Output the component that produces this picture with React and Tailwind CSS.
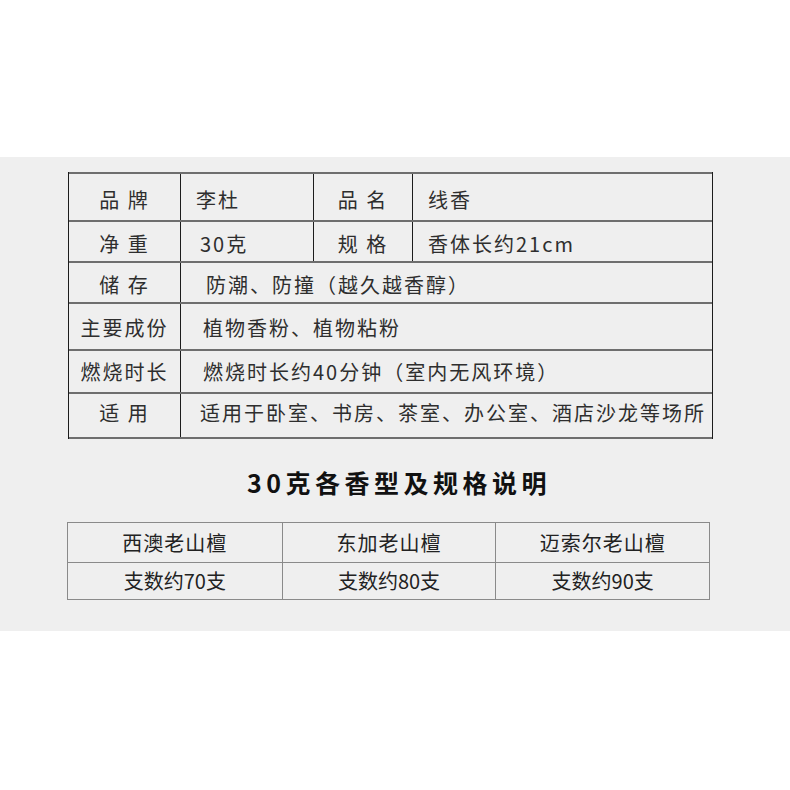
import React from "react";

const font = { fontFamily: '"Noto Sans CJK SC", "Noto Sans", sans-serif' };

function Row({ h, children, cols, last }) {
  return (
    <div
      className={`grid border-t-2 border-[#6e6e6e] ${last ? "border-b-2" : ""} ${cols}`}
      style={{ height: h }}
    >
      {children}
    </div>
  );
}

export default function App() {
  const labelCls =
    "flex items-center justify-center text-[20px] tracking-[2px] text-[#2e2e2e] leading-none";
  const valCls =
    "flex items-center border-l-[1.5px] border-[#1c1c1c] text-[20px] tracking-[2px] text-[#2e2e2e] leading-none whitespace-nowrap";
  return (
    <div className="w-[790px] h-[790px] bg-white" style={font}>
      <div className="h-[157px]" />
      <div className="h-[474px] bg-[#efefef] pt-[15px] flex flex-col">
        <div className="ml-[68px] w-[645px] border-x-[1.5px] border-[#1c1c1c]">
          <Row h={48} cols="grid-cols-[111px_133px_99px_1fr]">
            <div className={`${labelCls} pt-[6px]`}>品 牌</div>
            <div className={`${valCls} pl-[15px] pt-[6px]`}>李杜</div>
            <div className={`${valCls} justify-center pt-[6px]`}>品 名</div>
            <div className={`${valCls} pl-[15px] pt-[6px]`}>线香</div>
          </Row>
          <Row h={41} cols="grid-cols-[111px_133px_99px_1fr]">
            <div className={`${labelCls} pt-[4px]`}>净 重</div>
            <div className={`${valCls} pl-[19px] pt-[4px]`}>30克</div>
            <div className={`${valCls} justify-center pt-[4px]`}>规 格</div>
            <div className={`${valCls} pl-[15px] pt-[4px]`}>香体长约21cm</div>
          </Row>
          <Row h={41} cols="grid-cols-[111px_1fr]">
            <div className={`${labelCls} pt-[5px]`}>储 存</div>
            <div className={`${valCls} pl-[25px] pt-[5px]`}>防潮、防撞（越久越香醇）</div>
          </Row>
          <Row h={47} cols="grid-cols-[111px_1fr]">
            <div className={`${labelCls} pt-[3px]`}>主要成份</div>
            <div className={`${valCls} pl-[22px] pt-[3px]`}>植物香粉、植物粘粉</div>
          </Row>
          <Row h={43} cols="grid-cols-[111px_1fr]">
            <div className={`${labelCls} pt-[1px]`}>燃烧时长</div>
            <div className={`${valCls} pl-[22px] pt-[1px]`}>燃烧时长约40分钟（室内无风环境）</div>
          </Row>
          <Row h={47} cols="grid-cols-[111px_1fr]" last>
            <div className={`${labelCls} pb-[6px]`}>适 用</div>
            <div className={`${valCls} pl-[19px] pb-[6px] tracking-[1.8px]`}>
              适用于卧室、书房、茶室、办公室、酒店沙龙等场所
            </div>
          </Row>
        </div>

        <div className="mt-[25px] h-[36px] flex items-center justify-center pl-[8px] text-[25px] font-bold tracking-[4.5px] text-[#111] leading-none">
          30克各香型及规格说明
        </div>

        <div className="mt-[22px] ml-[67px] w-[643px] border-[1.5px] border-[#8a8a8a] text-[20px] text-[#222] leading-none">
          <div className="grid grid-cols-3 h-[40px] border-b-[1.5px] border-[#8a8a8a]">
            <div className="flex items-center justify-center tracking-[1px]">西澳老山檀</div>
            <div className="flex items-center justify-center tracking-[1px] border-l-[1.5px] border-[#8a8a8a]">东加老山檀</div>
            <div className="flex items-center justify-center tracking-[1px] border-l-[1.5px] border-[#8a8a8a]">迈索尔老山檀</div>
          </div>
          <div className="grid grid-cols-3 h-[36px]">
            <div className="flex items-center justify-center">支数约70支</div>
            <div className="flex items-center justify-center border-l-[1.5px] border-[#8a8a8a]">支数约80支</div>
            <div className="flex items-center justify-center border-l-[1.5px] border-[#8a8a8a]">支数约90支</div>
          </div>
        </div>
      </div>
    </div>
  );
}
